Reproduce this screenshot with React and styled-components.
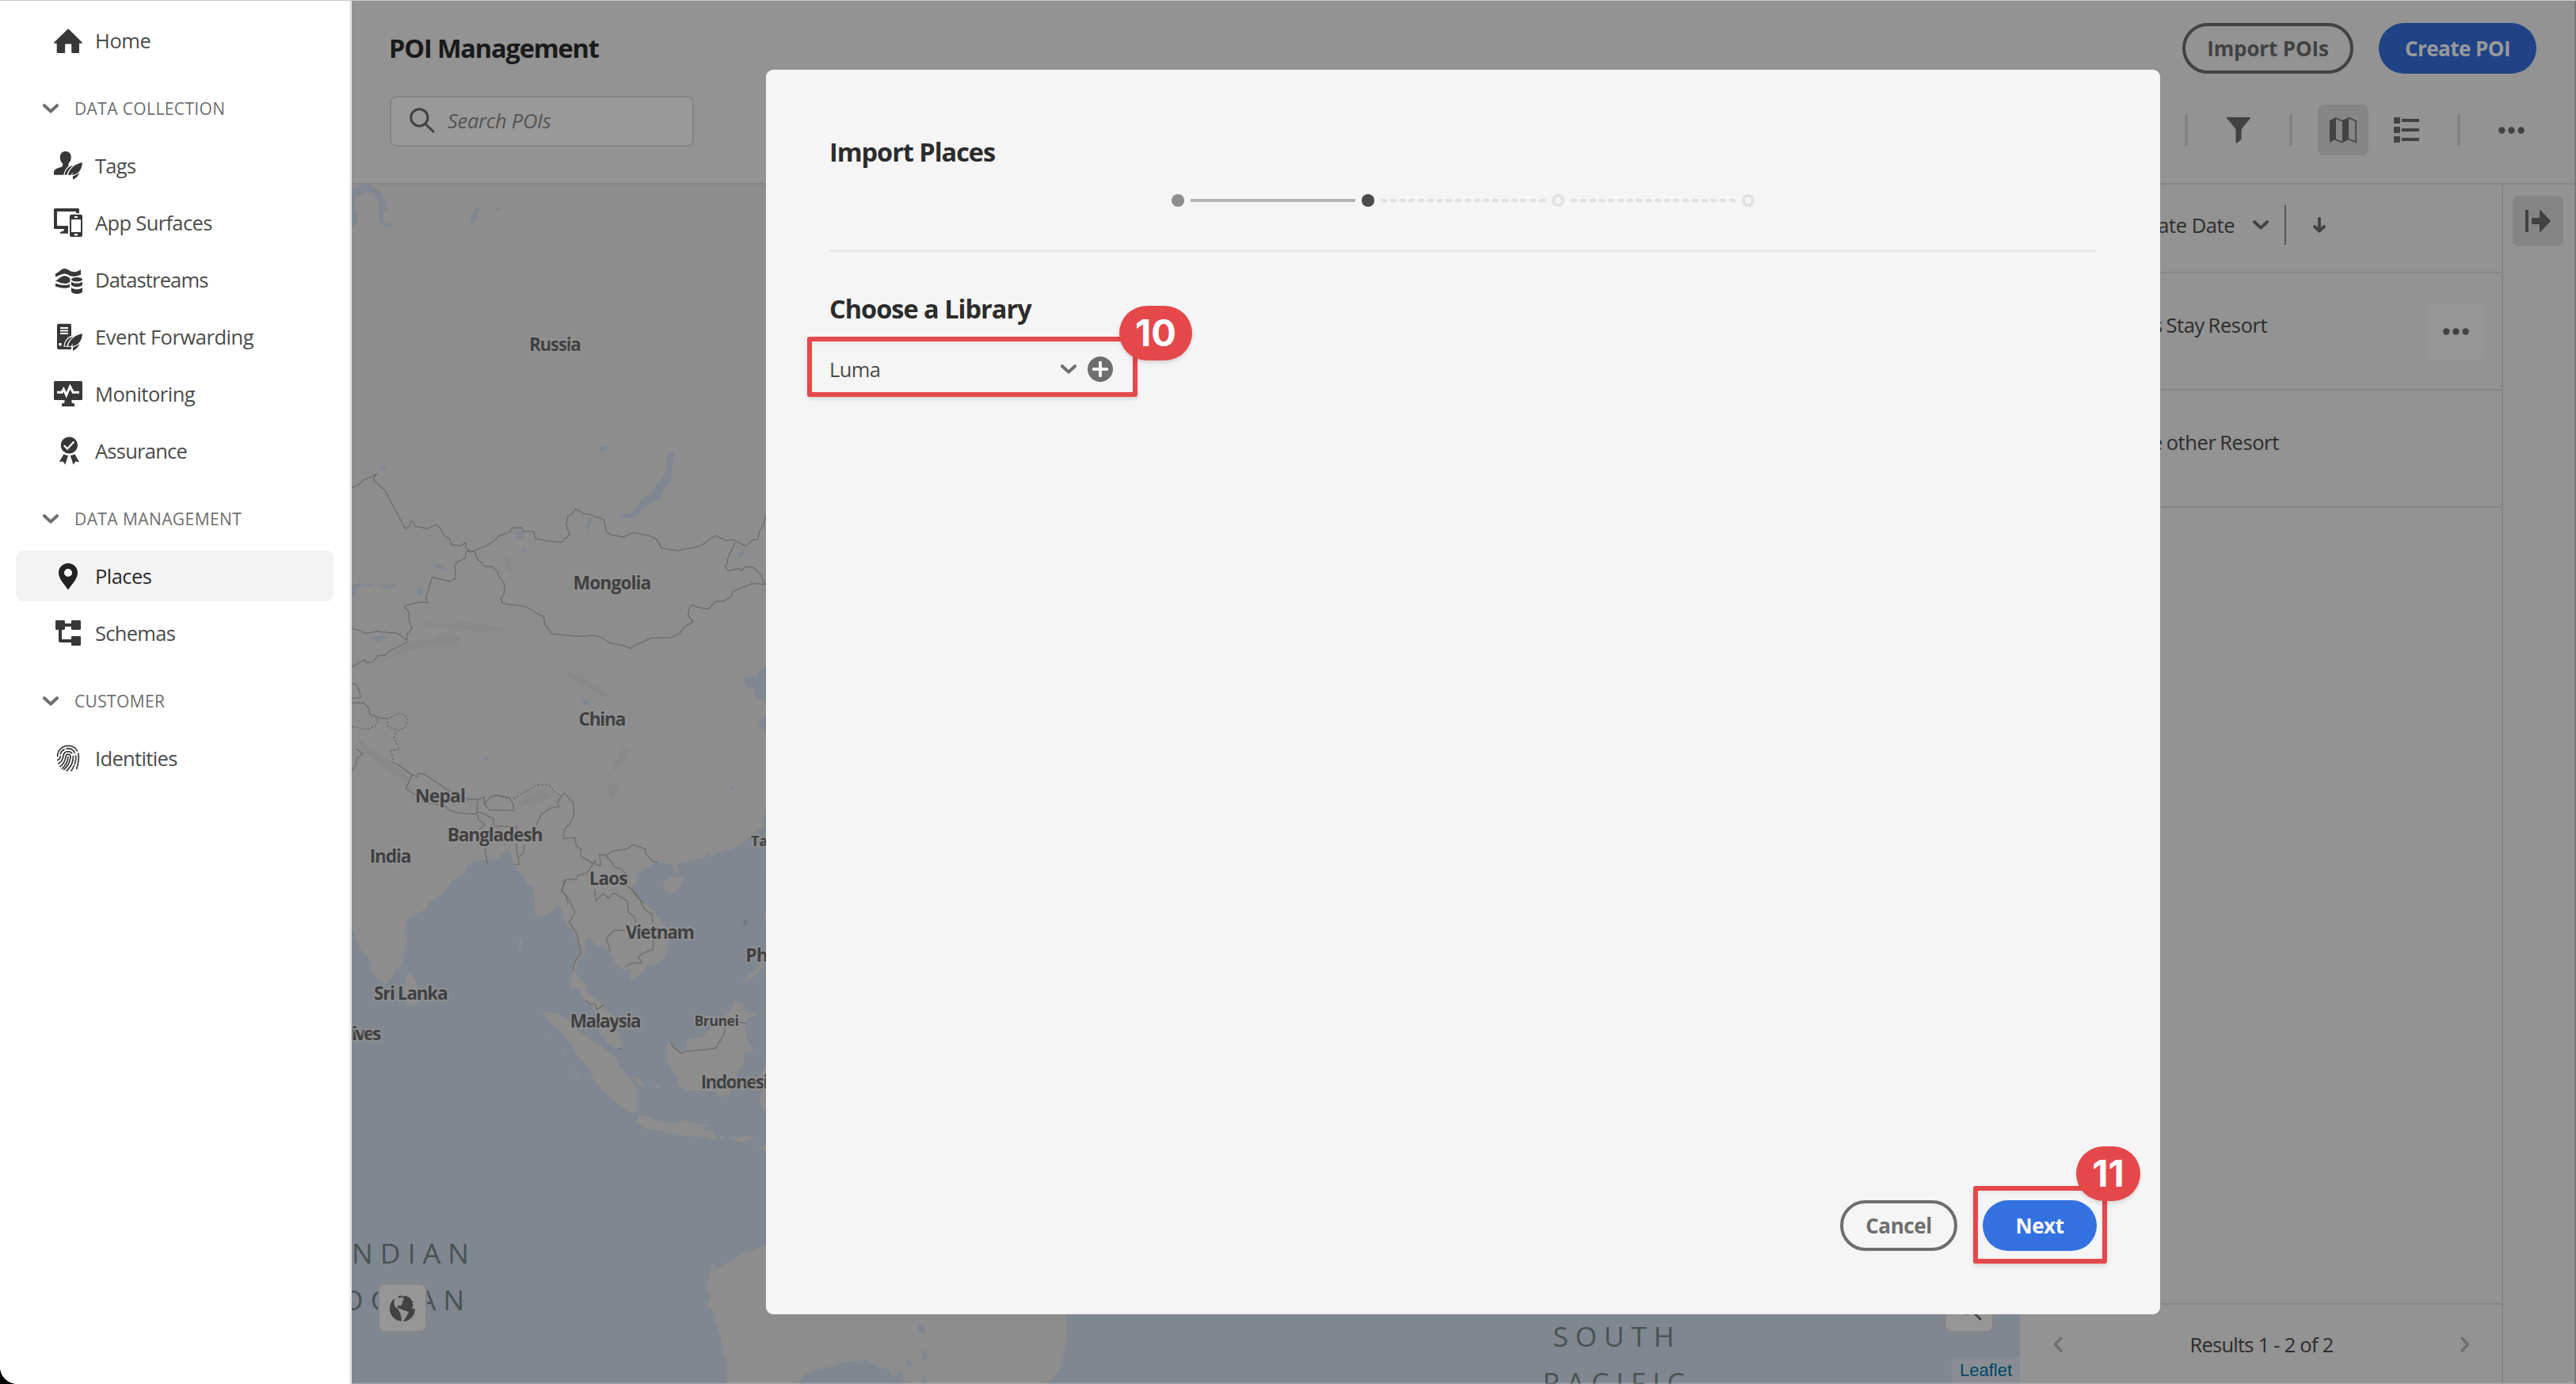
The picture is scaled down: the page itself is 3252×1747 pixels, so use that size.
import React from 'react';
import styled, { createGlobalStyle, css } from 'styled-components';

const Global = createGlobalStyle`
  * { box-sizing: border-box; }
  html, body { margin: 0; padding: 0; overflow: hidden; }
  body { background: #000; font-family: 'Open Sans', 'Noto Sans', sans-serif; }
`;

/* ---------- page shell ---------- */

const Page = styled.div`
  position: relative;
  display: flex;
  width: 3252px;
  height: 1747px;
  overflow: hidden;
  border-bottom-left-radius: 22px;
  background: #f5f5f5;
`;

const TopEdge = styled.div`
  position: absolute;
  inset: 0 0 auto 0;
  height: 1px;
  background: #cbcbcb;
`;

const BottomEdge = styled.div`
  position: absolute;
  inset: auto 0 0 444px;
  height: 2px;
  background: rgba(255, 255, 255, 0.16);
`;

const RightEdge = styled.div`
  position: absolute;
  inset: 1px 0 0 auto;
  width: 2px;
  background: #7b7b7b;
`;

/* ---------- sidebar ---------- */

const Sidebar = styled.nav`
  flex: none;
  width: 444px;
  padding: 19px 20px 0;
  background: #fff;
  border-right: 3px solid #e7e8e8;
`;

const NavItem = styled.div`
  display: flex;
  align-items: center;
  gap: 16px;
  width: 401px;
  height: 64px;
  padding-left: 48px;
  margin-bottom: ${(p) => (p.$last ? 0 : 8)}px;
  border-radius: 8px;
  background: ${(p) => (p.$active ? '#f3f3f3' : 'transparent')};
  color: ${(p) => (p.$active ? '#222' : '#373737')};
`;

const NavLabel = styled.span`
  padding-bottom: 1px;
  font-size: 25.5px;
  letter-spacing: ${(p) => p.$track}px;
  color: ${(p) => (p.$active ? '#2c2c2c' : '#4b4b4b')};
  white-space: nowrap;
`;

const NavHeading = styled.div`
  display: flex;
  align-items: center;
  gap: 20px;
  height: 94px;
  padding: 13px 0 0 34px;
  color: #6e6e6e;
  font-size: 21px;
  letter-spacing: ${(p) => p.$track}px;
`;

const NavIcon = styled.svg.attrs({ viewBox: '0 0 36 36' })`
  flex: none;
  width: 36px;
  height: 36px;
  fill: currentColor;
`;

/* ---------- main area ---------- */

const Main = styled.main`
  position: relative;
  display: flex;
  flex-direction: column;
  flex: 1;
  padding-right: 2px;
`;

const Header = styled.header`
  display: flex;
  justify-content: space-between;
  height: 233px;
  padding: 29px 48px 0;
  border-bottom: 2px solid #dedede;
`;

const Title = styled.h1`
  margin: 0 0 28px -1px;
  height: 64px;
  line-height: 64px;
  font-size: 32.5px;
  font-weight: 700;
  letter-spacing: -1.15px;
  color: #2c2c2c;
`;

const SearchBox = styled.div`
  display: flex;
  align-items: center;
  gap: 16px;
  width: 384px;
  height: 64px;
  padding: 0 0 2px 23px;
  border: 2px solid #dedede;
  border-radius: 8px;
  background: #fff;
  color: #8e8e8e;
  font-size: 25.5px;
  font-style: italic;
  letter-spacing: -0.3px;
`;

const HeaderActions = styled.div`
  display: flex;
  flex-direction: column;
  align-items: flex-end;
  gap: 39px;
`;

const ButtonRow = styled.div`
  display: flex;
  gap: 32px;
`;

const Button = styled.div`
  position: relative;
  display: flex;
  align-items: center;
  justify-content: center;
  width: ${(p) => p.$w}px;
  height: 64px;
  border-radius: 32px;
  font-size: 26px;
  font-weight: 700;
  letter-spacing: ${(p) => p.$track || 0}px;
  white-space: nowrap;
  ${(p) =>
    p.$primary
      ? css`
          background: #3471e0;
          color: #fff;
        `
      : css`
          border: 4px solid #6e6e6e;
          color: #6e6e6e;
        `}
`;

const Toolbar = styled.div`
  display: flex;
  align-items: center;
`;

const ToolButton = styled.div`
  display: flex;
  align-items: center;
  justify-content: center;
  width: 64px;
  height: 64px;
  border-radius: 8px;
  margin-left: ${(p) => p.$gap || 0}px;
  background: ${(p) => (p.$selected ? '#dedede' : 'transparent')};
  color: #6e6e6e;
`;

const ToolDivider = styled.div`
  width: 4px;
  height: 40px;
  margin: 0 32px;
  background: #dadada;
`;

const Glyph = styled.svg`
  display: block;
  flex: none;
  width: ${(p) => p.$w}px;
  height: ${(p) => p.$h}px;
  fill: currentColor;
`;

const Body = styled.div`
  display: flex;
  flex: 1;
  min-height: 0;
`;

/* ---------- map ---------- */

const MapPane = styled.section`
  position: relative;
  width: 2106px;
  overflow: hidden;
  background: #e9e9e9;
`;

const MapCanvas = styled.svg`
  display: block;
  width: 2106px;
  height: 1514px;
`;

const MapControl = styled.div`
  position: absolute;
  left: ${(p) => p.$left}px;
  top: 1387px;
  display: flex;
  align-items: center;
  justify-content: center;
  width: 62px;
  height: 62px;
  border: 2px solid #dedede;
  border-radius: 8px;
  background: #fafafa;
  color: #6e6e6e;
`;

const Attribution = styled.div`
  position: absolute;
  right: 0;
  bottom: 0;
  width: 86px;
  height: 33px;
  text-align: center;
  background: rgba(255, 255, 255, 0.35);
  color: #0078a8;
  font: 22px/32px 'Liberation Sans', Arial, sans-serif;
`;

/* ---------- results table ---------- */

const Results = styled.section`
  display: flex;
  flex-direction: column;
  width: 608px;
`;

const TableHead = styled.div`
  display: flex;
  align-items: center;
  height: 112px;
  padding-bottom: 9px;
  border-bottom: 2px solid #dedede;
  color: #6e6e6e;
`;

const HeadLabel = styled.span`
  width: 271px;
  margin-right: 23px;
  text-align: right;
  font-size: 25.5px;
  letter-spacing: -0.45px;
  color: #4b4b4b;
`;

const HeadDivider = styled.div`
  width: 2px;
  height: 50px;
  margin: 0 34px 0 20px;
  background: #8e8e8e;
`;

const TableRow = styled.div`
  display: flex;
  align-items: center;
  justify-content: space-between;
  height: 148px;
  padding: 0 22px 0 ${(p) => p.$indent}px;
  border-bottom: 2px solid #dedede;
`;

const RowName = styled.span`
  padding-bottom: 16px;
  font-size: 25.5px;
  letter-spacing: -0.4px;
  word-spacing: -1.5px;
  color: #4b4b4b;
`;

const RowMenu = styled.div`
  display: flex;
  align-items: center;
  justify-content: center;
  width: 72px;
  height: 72px;
  border-radius: 8px;
  background: #fbfbfb;
  color: #6e6e6e;
`;

const Pager = styled.div`
  display: flex;
  align-items: center;
  justify-content: space-between;
  height: 102px;
  margin-top: auto;
  padding: 0 40px 0 42px;
  border-top: 2px solid #dedede;
  color: #4b4b4b;
  font-size: 25.5px;
  letter-spacing: -0.75px;
`;

const Rail = styled.aside`
  width: 92px;
  padding: 14px 0 0 12px;
  border-left: 2px solid #dedede;
`;

/* ---------- dialog ---------- */

const Scrim = styled.div`
  position: absolute;
  inset: 0;
  background: rgba(0, 0, 0, 0.4);
`;

const Dialog = styled.div`
  position: absolute;
  left: 523px;
  top: 88px;
  display: flex;
  flex-direction: column;
  width: 1760px;
  height: 1571px;
  padding: 82px 80px 80px;
  border-radius: 9px;
  background: #f5f5f5;
`;

const DialogHeading = styled.h2`
  height: 44px;
  margin: ${(p) => p.$top || 0}px 0 0;
  line-height: 44px;
  font-size: 32.5px;
  font-weight: 700;
  letter-spacing: ${(p) => p.$track}px;
  color: #2c2c2c;
`;

const Steps = styled.div`
  display: flex;
  align-items: center;
  justify-content: center;
  gap: 8px;
  margin-top: 31px;
`;

const stepDot = {
  done: css`background: #8e8e8e;`,
  current: css`background: #4b4b4b;`,
  todo: css`border: 4px solid #e1e1e1;`,
};

const StepDot = styled.div`
  width: 16px;
  height: 16px;
  border-radius: 50%;
  ${(p) => stepDot[p.$state]}
`;

const StepLine = styled.div`
  width: 208px;
  height: 4px;
  background: ${(p) =>
    p.$done ? '#b3b3b3' : 'repeating-linear-gradient(90deg, #e1e1e1 0 8px, transparent 8px 11.76px)'};
`;

const Rule = styled.div`
  height: 4px;
  margin-top: 54px;
  background: #eaeaea;
`;

const LibraryField = styled.div`
  position: relative;
  display: flex;
  align-items: center;
  gap: 14px;
  width: 360px;
  height: 64px;
  margin-top: 22px;
  color: #6e6e6e;
`;

const LibraryValue = styled.span`
  width: 278px;
  font-size: 25.5px;
  letter-spacing: -0.6px;
  color: #4b4b4b;
`;

const DialogFooter = styled.div`
  display: flex;
  justify-content: flex-end;
  gap: 32px;
  margin-top: auto;
`;

const Highlight = styled.div`
  position: absolute;
  left: ${(p) => p.$x}px;
  top: ${(p) => p.$y}px;
  width: ${(p) => p.$w}px;
  height: ${(p) => p.$h}px;
  border: 6px solid #e5484b;
  border-radius: 3px;
  box-shadow: 0 3px 5px rgba(0, 0, 0, 0.12), inset 0 3px 5px rgba(0, 0, 0, 0.06);
`;

const StepBadge = styled.div`
  position: absolute;
  left: ${(p) => p.$x}px;
  top: ${(p) => p.$y}px;
  display: flex;
  align-items: center;
  justify-content: center;
  width: ${(p) => p.$w}px;
  height: 69px;
  border-radius: 35px;
  background: #e5484b;
  box-shadow: 0 3px 5px rgba(0, 0, 0, 0.12);
  color: #fff;
  font: 700 47px/67px Inter, sans-serif;
  padding-bottom: 2px;
  letter-spacing: ${(p) => p.$track || 0}px;
`;

/* ---------- icons ---------- */

const Feather = () => (
  <g>
    <path d="M12.2 30.5C13.5 23 18 16.5 24.5 16.6L33 12 37 12 24 37 22 31z" fill="#fff" />
    <path d="M13.6 29.6C14.8 23.6 18.6 18.2 24.4 18.3C20.3 21 17.4 24.8 16.4 29.8z" />
    <path d="M36 14.3C28 15.2 19.5 21.5 18 29.9L21.3 30.1 24.6 26 22.9 30.1C30 29.6 35.5 23.5 36 14.3z" />
    <path d="M32.3 26.6C30 29.3 27.2 30.6 24 31.4V35.8C28 34.2 31.2 31 32.3 26.6z" />
  </g>
);

const icons = {
  home: (
    <path d="M17.3 3.9a1.3 1.3 0 0 1 1.7 0L35.4 20.3c.7.7.4 1.4-.4 1.4H32V33a1 1 0 0 1-1 1h-7.700a1 1 0 0 1-1-1v-9.500a1 1 0 0 0-1-1h-6.200a1 1 0 0 0-1 1V33a1 1 0 0 1-1 1H4.700a1 1 0 0 1-1-1V21.700H1c-.9 0-1.200-.7-.5-1.400z" />
  ),
  tags: (
    <g>
      <path d="M14.8 0C19 0 21.8 3.1 21.8 7.3c0 3.2-1.3 6.5-3.4 8.2v2.3c0 1 .6 1.4 1.6 1.7L15 29.8H0v-3.6c0-3.3 4.7-5.4 8.7-6.3 1.600-.4 2.400-.8 2.400-2v-2.400C9 13.800 7.800 10.500 7.800 7.300 7.800 3.100 10.600 0 14.800 0z" />
      <Feather />
    </g>
  ),
  surfaces: (
    <g>
      <path d="M1.500 0h29A1.500 1.500 0 0 1 32 1.500V6h-4V4H4v18h14v9.700H8v-1.200c0-.8.7-1.100 2-1.300 1.500-.2 2.800-.6 2.800-1.600V26H1.500A1.500 1.500 0 0 1 0 24.500v-23A1.500 1.500 0 0 1 1.500 0z" />
      <path fillRule="evenodd" d="M22.500 7.800h11A2.500 2.500 0 0 1 36 10.300v23.200a2.500 2.500 0 0 1-2.500 2.500h-11a2.500 2.500 0 0 1-2.500-2.500V10.300a2.500 2.500 0 0 1 2.500-2.500zM22 14v16h12V14zM26 10v2h4v-2zM26 32v2.500h4V32z" />
    </g>
  ),
  streams: (
    <g>
      <path d="M2 10.500C7 9 9 4 13.500 4 18 4 20 8.500 26 8.200 29 8 31 6.800 34 5.500V12c-3 .5-5.500 2-9 2-5 0-8-3.500-11.500-3.500C9.500 10.500 6.500 13 2 14.500z" />
      <path d="M2 19.500c4-2 7-6.300 11.500-6.300 3 0 5 1.300 7 3.300v4.200c-2 1.500-4 2.300-7 2.300-4.500 0-7.500-2.300-11.500-3.500z" />
      <path d="M2 22.800c4 1 7 2.300 11 2.300 2.800 0 5-.5 7-1.500v3.900c-2 .9-4.200 1.300-7 1.300-4 0-7-1.500-11-2z" />
      <ellipse cx="29" cy="17.800" rx="7" ry="2.800" />
      <path d="M22 20.500c2 1.700 4.500 2.200 7 2.200s5-.5 7-2.200v4.300c-1 1.700-4 2.400-7 2.400s-6-.7-7-2.400z" />
      <path d="M22 28c2 1.700 4.500 2.200 7 2.200s5-.5 7-2.200v5.300c-1 1.900-4 2.700-7 2.700s-6-.8-7-2.700z" />
    </g>
  ),
  forwarding: (
    <g>
      <path d="M6 1.700h14a2 2 0 0 1 2 2V34H6a2 2 0 0 1-2-2V3.700a2 2 0 0 1 2-2z" />
      <path d="M8 6h10v2H8zM8 9.500h10v2H8zM8 13h10v2H8z" fill="#fff" />
      <circle cx="8" cy="27.700" r="1.900" fill="#fff" />
      <Feather />
      <path d="M11 34h11v-3z" />
    </g>
  ),
  monitoring: (
    <g>
      <path d="M1.500 2h33A1.500 1.500 0 0 1 36 3.500v21a1.500 1.500 0 0 1-1.500 1.500H22.500v2.500c0 1 .5 1.500 2 1.500 1 0 1.500.5 1.500 1.500V34H10v-2.500c0-1 .5-1.500 1.500-1.500 1.500 0 2-.5 2-1.500V26h-12A1.500 1.500 0 0 1 0 24.500v-21A1.500 1.500 0 0 1 1.500 2z" />
      <path d="M4 16.200h6l2.300-4 3.400 7.600L20.500 9l3.800 7.200H32" fill="none" stroke="#fff" strokeWidth="3" />
    </g>
  ),
  assurance: (
    <g>
      <circle cx="19.400" cy="11" r="10.600" />
      <path d="M12.800 11.200l4.200 4.400 8.400-9.200" fill="none" stroke="#fff" strokeWidth="2.200" />
      <path d="M12.500 22.300c1.900 1 3.600 1.500 5.500 1.600L14.300 35.400 11.500 31.400 6.800 32zM26.300 22.300c-1.900 1-3.600 1.500-5.500 1.600l3.700 11.500 2.800-4 4.700.6z" />
    </g>
  ),
  places: (
    <path fillRule="evenodd" d="M18 2c6.700 0 12 5.300 12 12 0 8-7.500 14.500-12 21.500C13.500 28.500 6 22 6 14 6 7.300 11.300 2 18 2zm0 6.900a5.100 5.100 0 1 0 0 10.200 5.100 5.100 0 0 0 0-10.200z" />
  ),
  schemas: (
    <path d="M3.200 2h9.600A1.200 1.200 0 0 1 14 3.200V6h8V3.200A1.200 1.200 0 0 1 23.200 2h9.600A1.200 1.200 0 0 1 34 3.200v9.600a1.200 1.200 0 0 1-1.200 1.200h-9.600a1.200 1.200 0 0 1-1.200-1.200V10h-8v2.800a1.200 1.200 0 0 1-1.200 1.200H10v12h12v-2.800a1.200 1.200 0 0 1 1.200-1.200h9.600a1.200 1.200 0 0 1 1.200 1.200v9.600a1.200 1.200 0 0 1-1.200 1.200h-9.600a1.200 1.200 0 0 1-1.200-1.200V30H8a2 2 0 0 1-2-2V14H3.200A1.200 1.200 0 0 1 2 12.800V3.200A1.200 1.200 0 0 1 3.200 2z" />
  ),
  identities: (
    <g fill="none" stroke="currentColor" strokeWidth="1.700" strokeLinecap="round">
      <path d="M4.600 15.500C4.800 8 10.500 2.400 18 2.400c5 0 9.300 2.500 11.500 6.400" />
      <path d="M30.800 12c1.300 5 .5 11-2.100 19.500" />
      <path d="M8.300 12.500c.8-2.700 2.500-4.600 4.700-5.600M16 6.100c5-.7 8.700 1.500 10.300 5" />
      <path d="M4.800 20.500c2.300-1 3.200-2.600 3.500-4.800" />
      <path d="M5.800 24.800C9.800 22.500 11.200 19 11.700 15.800 12.200 12 14.800 9.700 18 9.700c2 0 3.700.8 4.800 2.200" />
      <path d="M8 28.500c4.200-3.300 6.300-7.500 7-12.200.2-2 1.500-3.200 3-3.200 2 0 3.200 1.500 3 3.500-.7 6-3.600 11.700-8.300 15.800" />
      <path d="M10.500 31.200c4-3.500 6.800-8.500 7.500-14.500" />
      <path d="M24.400 15.500c.3 6.500-3.500 14-8.200 18.700" />
      <path d="M27.600 15c.7 3.500-.2 7-1.300 10.200M25.500 27.300c-.9 2.300-2 4.300-3.400 6.500" />
    </g>
  ),
};

const Chevron = () => (
  <Glyph $w={20} $h={12} viewBox="0 0 20 12">
    <path d="M2 2.200l8 7.400 8-7.400" fill="none" stroke="currentColor" strokeWidth="4" strokeLinecap="round" strokeLinejoin="round" />
  </Glyph>
);

const Dots = () => (
  <Glyph $w={33} $h={9} viewBox="0 0 33 9">
    <circle cx="4.300" cy="4.500" r="4.200" />
    <circle cx="16.500" cy="4.500" r="4.200" />
    <circle cx="28.700" cy="4.500" r="4.200" />
  </Glyph>
);

const SearchIcon = () => (
  <Glyph $w={32} $h={32} viewBox="0 0 32 32">
    <g fill="none" stroke="#6e6e6e" strokeWidth="3" strokeLinecap="round">
      <circle cx="12.400" cy="12.400" r="10.600" />
      <path d="M20.600 21l9.400 9" />
    </g>
  </Glyph>
);

const FilterIcon = () => (
  <Glyph $w={30} $h={33} viewBox="0 0 30 33">
    <path d="M1 0h28c1 0 1.200.8.6 1.500L18.700 15v12.800L13 32.600c-.8.5-1.500.2-1.500-.6V15L.4 1.500C-.2.8 0 0 1 0z" />
  </Glyph>
);

const MapIcon = () => (
  <Glyph $w={34} $h={33} viewBox="0 0 34 33">
    <path d="M8 0L0 4.300V31.700l8-4z" />
    <path d="M16 4l8-4v28l-8 4.300z" />
    <path d="M7 .8l9.500 4M24 .8l9.200 4V31.300L24 27.800M7 28l9.500 3.700" fill="none" stroke="currentColor" strokeWidth="1.600" />
  </Glyph>
);

const ListIcon = () => (
  <Glyph $w={32} $h={32} viewBox="0 0 32 32">
    {[0, 12, 24].map((y) => (
      <g key={y}>
        <rect x="0" y={y} width="8" height="8" rx="1" />
        <rect x="10" y={y + 2} width="22" height="4" />
      </g>
    ))}
  </Glyph>
);

const CollapseIcon = () => (
  <Glyph $w={32} $h={28} viewBox="0 0 32 28">
    <path d="M0 0h4v28H0zM9 10h9V.7c0-.7.7-.9 1.200-.4L31.600 13.300a1 1 0 0 1 0 1.400L19.200 27.700c-.5.5-1.200.3-1.200-.4V18H9a1 1 0 0 1-1-1v-6a1 1 0 0 1 1-1z" />
  </Glyph>
);

const SortDown = () => (
  <Glyph $w={16} $h={20} viewBox="0 0 16 20">
    <path d="M8 2v14M2 12l6 5.700 6-5.700" fill="none" stroke="currentColor" strokeWidth="3.800" strokeLinecap="round" strokeLinejoin="round" />
  </Glyph>
);

const GlobeIcon = () => (
  <Glyph $w={32} $h={33} viewBox="0 0 32 33">
    <path d="M6.500 3.800C5.500 7 5 10.500 6 13.500c.7 1.500 2.800 2 4.200 3.700 2.300 3 5 8.300 4.800 15.500C6.500 32 0 25.500 0 17 0 11.500 2.500 6.800 6.500 3.800z" />
    <path d="M10 1.400C12 .6 14 .4 15.500.5L17 1.800 20 .7c4 1 7 3.500 8.300 7L30 7.800l-1.500 2 1.200 3.700c-1.500.5-1.300 1.700-.7 3.700H32C31.700 26 25.500 32.700 16.700 33c3-3.500 5.500-7.500 7.300-12L15.500 18 10 16V12.700l3.600.6c2.500-1.500 2.300-4.300 2.900-7.300L13.500 6.300l-1.300-3z" />
    <path d="M13.500 2.500l3.300.3v1.700H18v2l-3.200-.3-1 1.200-1.500-1.700z" fill="#fafafa" />
  </Glyph>
);

const AddIcon = () => (
  <Glyph $w={32} $h={32} viewBox="0 0 32 32">
    <circle cx="16" cy="16" r="16" />
    <path d="M16 7.700v16.600M7.700 16h16.600" stroke="#f5f5f5" strokeWidth="4" strokeLinecap="round" />
  </Glyph>
);

const PagerArrow = ({ next }) => (
  <Glyph $w={12} $h={20} viewBox="0 0 12 20">
    <path d={next ? 'M2 2l7.500 8L2 18' : 'M10 2L2.500 10 10 18'} fill="none" stroke="#b9b9b9" strokeWidth="3.400" strokeLinecap="round" strokeLinejoin="round" />
  </Glyph>
);

/* ---------- map artwork ---------- */

const WATER = '#d6e2f2';
const LAND = '#ebebeb';

const northLakes = [
  '12,664 35,663 55,652 75,650 100,668 125,685 133,710 142,740 128,747 125,775 135,787 165,793 160,801 140,800 115,785 113,710 96,700 94,680 65,680 30,692 22,705 22,735 34,760 34,785 12,808',
  '448,770 462,745 468,733 490,732 488,740 470,750 474,770 460,785 448,803',
  '530,732 560,736 548,742 540,745',
];

const inlandWater = [
  '1175,80 1196,78 1190,110 1183,175 1160,195 1140,235 1100,252 1075,265 1060,290 1030,300 993,292 998,285 1040,278 1060,255 1080,230 1115,218 1098,215 1140,180 1160,150 1168,110',
  '918,80 925,60 945,60 960,64 940,72', '115,128 140,125 135,138 120,137',
  '880,296 893,300 887,325 877,342 873,325', '612,345 628,338 644,352 635,367 615,365',
  '633,400 655,403 655,413 645,412', '308,449 330,450 350,460 360,470 345,470 325,460',
  '12,520 45,513 48,520 30,530 25,545 12,560', '50,517 90,513 92,520 55,522',
  '115,518 140,520 160,522 178,512 172,526 150,532 120,524',
  '252,535 262,525 275,545 270,553 256,550', '85,690 145,683 130,698 110,706 95,703',
  '857,895 875,897 890,907 885,917 860,912', '493,1090 503,1086 513,1093 500,1100',
  '1430,420 1445,402 1452,412 1437,430', '1397,1182 1408,1178 1413,1190 1402,1194',
  '1530,790 1505,802 1500,820 1452,822 1450,845 1465,860 1490,860 1495,895 1530,898',
  '1530,950 1505,970 1505,985 1530,1000',
  '1530,1265 1518,1290 1522,1310 1490,1340 1455,1360 1420,1385 1370,1398 1330,1412 1318,1400 1312,1415 1250,1430 1205,1438 1200,1445 1212,1465 1200,1472 1188,1440 1135,1432 1110,1440 1080,1462 1078,1475 1530,1475',
  '425,1475 435,1445 455,1430 510,1425 550,1422 575,1395 590,1397 600,1420 612,1445 635,1475',
];

const southLand = [
  '7,0 242,0 235,12 215,25 205,50 190,72 165,98 160,115 145,125 135,138 120,148 118,180 121,215 115,250 110,290 98,298 92,320 75,345 62,335 50,310 40,265 25,240 18,210 7,170',
  '122,310 134,325 142,350 148,395 135,412 122,412 114,385 116,340',
  '350,0 362,20 368,40 380,45 383,70 385,95 382,120 388,135 400,140 418,125 430,98 438,110 445,150 460,180 472,210 478,250 465,290 457,320 456,355 475,360 482,385 500,410 510,430 512,475 520,500 535,525 560,545 566,535 560,510 555,475 545,440 525,410 510,390 492,370 488,345 475,325 466,305 478,270 488,250 487,205 500,205 510,228 525,230 540,250 548,275 555,290 565,300 582,300 578,340 595,320 612,305 612,292 640,280 655,260 660,220 657,190 645,150 620,110 600,85 590,70 585,45 597,25 597,0',
  '665,20 690,15 686,38 670,68 655,62 648,45 652,30',
  '400,428 430,435 450,450 465,475 480,495 510,525 535,550 555,575 557,595 572,618 585,645 598,670 595,738 575,735 550,705 520,665 505,635 495,600 475,570 460,530 445,505 430,480 410,455',
  '600,745 620,752 640,765 675,772 690,760 712,772 745,775 728,782 738,793 755,798 757,822 735,812 700,810 660,800 610,785 592,768',
  '762,808 775,812 768,822', '783,812 805,814 820,808 840,815 825,822 808,830 798,822', '842,843 862,840 862,858',
  '655,535 665,525 675,548 697,545 697,515 730,505 750,475 775,445 790,420 795,395 812,400 818,425 843,437 822,450 818,470 822,515 836,553 818,555 813,590 800,620 788,680 765,690 757,672 700,670 680,655 678,630 665,605 655,575',
  '862,570 858,600 848,625 853,650 848,700 855,735 862,730', '812,342 825,318 850,285 858,287 845,310 820,338',
  '862,125 857,145 862,158', '585,627 600,632 611,660 598,655', '630,655 640,655 638,665',
  '412,503 418,510 414,512', '440,540 447,555 442,560', '465,605 476,628 468,625',
  '354,205 357,215 353,250 351,240',
  '862,1143 830,1160 815,1165 795,1187 770,1205 758,1222 756,1200 750,1200 745,1225 738,1270 748,1310 736,1325 752,1345 757,1380 767,1415 770,1460 782,1510 780,1568 930,1568 940,1540 965,1523 1000,1515 1022,1500 1070,1495 1090,1515 1113,1522 1123,1550 1138,1530 1148,1568 1440,1568 1465,1530 1475,1470 1483,1400 1475,1340 1400,1100',
];

const southWater = [
  '1175,1380 1187,1395 1190,1418 1175,1410', '1182,1460 1196,1480 1190,1500 1183,1495',
  '1148,1488 1160,1500 1162,1518 1152,1508', '1222,1468 1232,1462 1228,1480', '1180,1568 1190,1540 1190,1568',
];

const borders = [
  '12,198 35,188 55,172 85,162 103,152 90,170 135,208 207,332 225,325 228,308 240,312 243,325 290,332 320,320 337,332 350,355 370,365 378,385 410,390 430,378 430,395 450,410 470,400 500,392 530,375 555,355 590,345 600,330 635,330 640,342 678,342 685,365 720,372 780,378 810,352 798,320 805,290 820,285 832,267 860,282 890,288 937,303 943,338 957,352 1005,360 1045,346 1100,355 1130,368 1148,397 1205,406 1290,390 1345,355 1385,372 1408,368 1457,390 1485,368 1500,368 1505,345 1520,320 1530,290',
  '1418,378 1388,435 1390,448 1380,455 1392,472 1430,464 1441,473 1455,458 1482,460 1512,485 1526,516 1480,514 1440,528 1410,540 1402,557 1375,572 1346,573 1318,598 1280,592 1262,585 1250,592 1245,617 1262,640 1230,658 1212,680 1180,692 1112,693 1060,713 1032,728 1015,720 960,710 925,690 895,685 850,688 748,681 720,650 715,622 700,618 652,590 565,580 558,565 571,545 571,515 552,490 545,472 525,458 500,457 470,430 463,408 432,408 428,430 395,445 390,460 393,497 372,507 307,493 283,560 290,577 265,575 210,585 205,592 220,605 222,635 232,662 215,680 213,708 150,737 135,750 105,752 90,772 65,775 60,765 12,788',
  '12,660 65,678 100,672 180,678 212,700',
  '12,842 30,850 40,870 43,890 12,892', '12,907 55,907 75,925 77,945 95,950 115,958 140,958',
  '12,1132 28,1110 28,1092 52,1075 30,1060',
  '233,1145 210,1190 240,1208 280,1235 355,1248 370,1262 400,1270 470,1275 475,1225 440,1225 420,1220 372,1200 340,1180 315,1165 275,1142 255,1140 252,1150 233,1145 175,1108',
  '475,1225 497,1218 498,1240 515,1260 603,1263 605,1243 590,1220 545,1212 520,1218 498,1240',
  '470,1268 485,1270 500,1275 530,1290 533,1315 615,1315 620,1330',
  '500,1385 508,1437', '475,1275 475,1292 500,1308 480,1325',
  '613,1370 625,1440 612,1442', '645,1375 640,1405 622,1415',
  '688,1312 705,1275 740,1255 772,1250 765,1238 780,1215 792,1205 825,1240 826,1280 810,1305 792,1325 787,1355 830,1352 835,1380 853,1390 850,1412 895,1437 905,1428 905,1440 925,1445 920,1408 945,1410 970,1395 1020,1390 1043,1375 1090,1390 1090,1405 1115,1430 1133,1434',
  '900,1435 875,1468 840,1478 835,1490 797,1490 780,1528 795,1540 805,1568',
  '940,1408 962,1430 975,1450 1000,1455 1025,1480 1000,1500 1035,1520 1060,1550 1082,1568',
];

const southBorders = [
  '445,25 440,60 455,85 467,125 455,155 470,190 480,250 467,275 462,305',
  '507,55 510,90 525,68 537,82 547,65 575,90 577,125 590,140 592,155', '582,50 600,85 610,115 625,130 628,160',
  '570,180 547,181 532,205 540,245', '628,200 628,238 610,248 597,262 605,280 585,280 570,292',
  '490,395 497,405 508,405 512,422 526,408', '555,543 562,541 563,545',
  '665,522 668,535 685,556 697,550 718,547 740,545 758,540 765,520 775,495 776,475', '805,460 820,465',
  '815,153 820,152 822,160 817,163 815,153',
];

const dotted = [
  '12,985 65,995 97,985 108,970 95,950', '140,962 182,942 202,945 218,962 205,990 180,1000 145,985 140,962',
  '175,1005 165,1025 188,1060 155,1065 165,1105 175,1110', '605,1225 640,1205 690,1178 735,1178 755,1200 780,1215',
  '520,1218 545,1212 590,1225',
];

const relief = [
  '25,1020 60,1040 110,1080 150,1100 220,1150 225,1170 170,1150 120,1115 60,1070',
  '200,720 250,700 320,700 330,680 405,690 410,718 330,716 230,732 100,780',
  '230,625 330,650 440,640 570,660 560,670 470,675 400,660 300,655',
  '1005,1045 1025,1060 1010,1100 975,1130 945,1165 920,1220 935,1170 970,1120',
  '950,1180 990,1165 985,1200 960,1230', '605,1260 650,1215 700,1195 760,1215 700,1235 640,1250',
  '570,420 590,430 600,485 575,470', '430,1225 470,1225 470,1262 440,1240', '780,800 850,820 965,890 930,885 850,845',
];

const countries = [
  ['Russia', 668, 443, 66], ['Mongolia', 723.5, 744, 99], ['China', 730.5, 916, 60], ['Nepal', 524, 1013.4, 64],
  ['Bangladesh', 564.7, 1062.4, 121], ['India', 466.7, 1089, 53], ['Laos', 743.7, 1116.7, 49],
  ['Vietnam', 790, 1184.6, 87], ['Sri Lanka', 472, 1262, 94], ['Malaysia', 719.6, 1297, 90],
  ['Maldives', 397.5, 1312.5, 84], ['Indonesia', 884.7, 1373.6, 98], ['Philippines', 941.3, 1213.9, 116],
];

const oceans = [
  ['INDIAN', 425, 1595, 9.1], ['OCEAN', 431, 1653.5, 9.1], ['SOUTH', 1960.5, 1699.7, 8.6], ['PACIFIC', 1947.5, 1758, 8.8],
];

const CountryText = styled.text`
  font-size: ${(p) => p.$size}px;
  font-weight: 700;
  fill: #6c6c6c;
  stroke: #f6f6f6;
  stroke-opacity: 0.7;
  stroke-width: 4px;
  stroke-linejoin: round;
  paint-order: stroke;
`;

const OceanText = styled.text`
  font-size: 35.5px;
  letter-spacing: ${(p) => p.$track}px;
  fill: #7b8a8b;
`;

const Shapes = ({ list, fill, opacity }) =>
  list.map((points) => <polygon key={points} points={points} fill={fill} opacity={opacity} />);

const Lines = ({ list, dash }) =>
  list.map((points) => (
    <polyline key={points} points={points} fill="none" stroke="#b4b4b4" strokeWidth="1.300" strokeDasharray={dash} vectorEffect="non-scaling-stroke" />
  ));

const WorldMap = () => (
  <MapCanvas viewBox="444 233 2106 1514">
    <rect x="444" y="233" width="2106" height="1514" fill={LAND} />
    <g transform="translate(440 0) scale(.34436 .35714)">
      <Shapes list={northLakes} fill={WATER} />
    </g>
    <g transform="translate(440 540) scale(.34436 .38265)">
      <Shapes list={relief} fill="#000" opacity="0.022" />
      <Shapes list={inlandWater} fill={WATER} />
    </g>
    <rect x="444" y="1100" width="2106" height="647" fill={WATER} />
    <g transform="translate(440 1100) scale(.61224 .41262)">
      <Shapes list={southLand} fill={LAND} />
      <Shapes list={southWater} fill={WATER} />
      <Lines list={southBorders} />
    </g>
    <g transform="translate(440 540) scale(.34436 .38265)">
      <polygon points="1155,1510 1172,1490 1200,1480 1227,1490 1215,1515 1185,1538 1160,1530" fill={LAND} />
      <Lines list={borders} />
      <Lines list={dotted} dash="3 2" />
    </g>
    {countries.map(([name, x, y, w]) => (
      <CountryText key={name} $size={23} x={x} y={y} textLength={w}>{name}</CountryText>
    ))}
    <CountryText $size={18} x="948" y="1068">Taiwan</CountryText>
    <CountryText $size={18} x="876.500" y="1294.800" textLength="56.500">Brunei</CountryText>
    {oceans.map(([name, x, y, track]) => (
      <OceanText key={name} x={x} y={y} $track={track}>{name}</OceanText>
    ))}
  </MapCanvas>
);

/* ---------- navigation data ---------- */

const navGroups = [
  {
    title: 'DATA COLLECTION',
    track: 0.38,
    items: [
      ['tags', 'Tags', -0.7],
      ['surfaces', 'App Surfaces', -0.65],
      ['streams', 'Datastreams', -0.85],
      ['forwarding', 'Event Forwarding', -0.45],
      ['monitoring', 'Monitoring', -0.5],
      ['assurance', 'Assurance', -0.75],
    ],
  },
  {
    title: 'DATA MANAGEMENT',
    track: 0.42,
    items: [
      ['places', 'Places', -0.55, true],
      ['schemas', 'Schemas', -0.7],
    ],
  },
  { title: 'CUSTOMER', track: 0.35, items: [['identities', 'Identities', -0.65]] },
];

const NavEntry = ({ icon, label, track, active, last }) => (
  <NavItem $active={active} $last={last}>
    <NavIcon>{icons[icon]}</NavIcon>
    <NavLabel $track={track} $active={active}>{label}</NavLabel>
  </NavItem>
);

export default function App() {
  return (
    <>
      <Global />
      <Page>
        <Sidebar>
          <NavEntry icon="home" label="Home" track={-0.4} last />
          {navGroups.map((group) => (
            <div key={group.title}>
              <NavHeading $track={group.track}>
                <Chevron />
                {group.title}
              </NavHeading>
              {group.items.map(([icon, label, track, active], i) => (
                <NavEntry key={label} icon={icon} label={label} track={track} active={active} last={i === group.items.length - 1} />
              ))}
            </div>
          ))}
        </Sidebar>

        <Main>
          <Header>
            <div>
              <Title>POI Management</Title>
              <SearchBox>
                <SearchIcon />
                Search POIs
              </SearchBox>
            </div>
            <HeaderActions>
              <ButtonRow>
                <Button $w={216} $track={-0.15}>Import POIs</Button>
                <Button $w={199} $primary $track={-0.55}>Create POI</Button>
              </ButtonRow>
              <Toolbar>
                <ToolDivider />
                <ToolButton><FilterIcon /></ToolButton>
                <ToolDivider />
                <ToolButton $selected><MapIcon /></ToolButton>
                <ToolButton $gap={16}><ListIcon /></ToolButton>
                <ToolDivider />
                <ToolButton><Dots /></ToolButton>
              </Toolbar>
            </HeaderActions>
          </Header>

          <Body>
            <MapPane>
              <WorldMap />
              <MapControl $left={33}><GlobeIcon /></MapControl>
              <MapControl $left={2011}><SearchIcon /></MapControl>
              <Attribution>Leaflet</Attribution>
            </MapPane>

            <Results>
              <TableHead>
                <HeadLabel>ate Date</HeadLabel>
                <Chevron />
                <HeadDivider />
                <SortDown />
              </TableHead>
              <TableRow $indent={168}>
                <RowName>s Stay Resort</RowName>
                <RowMenu><Dots /></RowMenu>
              </TableRow>
              <TableRow $indent={166}>
                <RowName>e other Resort</RowName>
              </TableRow>
              <Pager>
                <PagerArrow />
                Results 1 - 2 of 2
                <PagerArrow next />
              </Pager>
            </Results>

            <Rail>
              <ToolButton $selected><CollapseIcon /></ToolButton>
            </Rail>
          </Body>

          <Scrim />

          <Dialog>
            <DialogHeading $track={-1.05}>Import Places</DialogHeading>
            <Steps>
              <StepDot $state="done" />
              <StepLine $done />
              <StepDot $state="current" />
              <StepLine />
              <StepDot $state="todo" />
              <StepLine />
              <StepDot $state="todo" />
            </Steps>
            <Rule />
            <DialogHeading $top={49} $track={-1}>Choose a Library</DialogHeading>
            <LibraryField>
              <LibraryValue>Luma</LibraryValue>
              <Chevron />
              <AddIcon />
              <Highlight $x={-28} $y={-9} $w={417} $h={76}>
                <StepBadge $x={388} $y={-45} $w={92}>10</StepBadge>
              </Highlight>
            </LibraryField>
            <DialogFooter>
              <Button $w={148} $track={-0.4}>Cancel</Button>
              <Button $w={144} $primary $track={-0.4}>
                Next
                <Highlight $x={-12} $y={-18} $w={169} $h={98}>
                  <StepBadge $x={124} $y={-56} $w={81}>11</StepBadge>
                </Highlight>
              </Button>
            </DialogFooter>
          </Dialog>
        </Main>
        <TopEdge />
        <BottomEdge />
        <RightEdge />
      </Page>
    </>
  );
}
